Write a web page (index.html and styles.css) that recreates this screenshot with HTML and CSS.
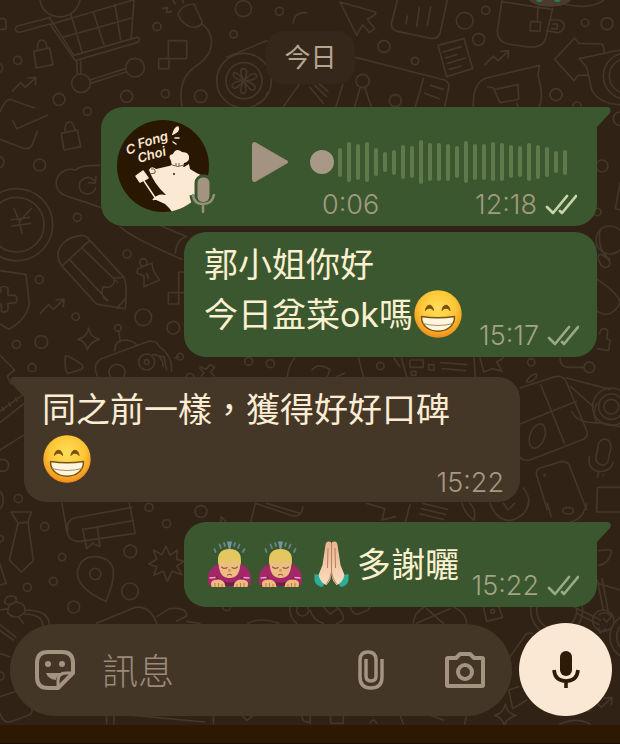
FILE: index.html
```html
<!DOCTYPE html>
<html lang="zh-Hant">
<head>
  <meta charset="UTF-8" />
  <meta name="viewport" content="width=device-width, initial-scale=1.0"/>
  <title>今日</title>
  <link rel="stylesheet" href="styles.css">
</head>
<body>
  <!-- wallpaper doodles -->
  <svg class="wallpaper" viewBox="0 0 1860 2232" preserveAspectRatio="xMidYMin slice" aria-hidden="true">
    <defs>
      <g id="lock"><path d="M-26 -18 L22 -28 L32 22 L-18 32Z M-14 -22 C-20 -60 12 -62 14 -28"/></g>
      <g id="zigzag"><path d="M-35 22 L-10 -4 L4 10 L34 -18 M12 -18 L36 -20 L34 2"/></g>
      <g id="star"><path d="M0 -34 Q4 -6 32 0 Q4 8 -4 32 Q-8 6 -32 0 Q-6 -6 0 -34Z"/></g>
    </defs>
    <!-- top left -->
    <g>
      <path d="M120 0 C130 65 225 70 240 0 M155 72 L400 0 M152 52 L52 78 C40 84 48 100 62 96 L150 72 M150 55 L222 166 L410 112 C422 112 420 124 410 128 L226 182 L150 72 M188 112 L395 54 M212 40 L246 156 M280 36 L312 134 M345 14 L362 120 M402 0 L394 112 M230 184 L232 222 M242 184 L242 222 M270 240 L376 206 M272 250 L378 216"/>
      <circle cx="243" cy="250" r="28"/><circle cx="405" cy="203" r="28"/>
      <path d="M0 56 L12 56 Q18 58 18 66 L18 88 L0 88"/>
      <use href="#lock" x="127" y="172"/><use href="#lock" x="210" y="418"/><use href="#zigzag" x="72" y="252"/>
      <path d="M104 324 L30 298 Q14 298 0 336 M38 362 L50 386 L142 346 M112 394 L96 436 Q88 450 68 444 L0 418"/>
      <path d="M534 42 Q544 14 582 12 L606 64 Q606 80 584 82 Q548 80 534 42Z M488 26 L502 22 L500 38 L514 34 M518 0 L526 12 M548 0 L550 8 M606 72 C640 96 650 150 600 190 C550 220 535 260 546 320"/>
      <path d="M505 122 H560 V176 H505Z M476 176 H507 V206 H476Z"/>
      <circle cx="730" cy="26" r="24"/><circle cx="838" cy="34" r="12"/><circle cx="701" cy="103" r="11"/><circle cx="471" cy="80" r="12"/><circle cx="380" cy="289" r="18"/><circle cx="496" cy="281" r="12"/><circle cx="602" cy="289" r="19"/><circle cx="177" cy="298" r="18"/><circle cx="262" cy="334" r="12"/><circle cx="53" cy="181" r="12"/><circle cx="119" cy="495" r="18"/><circle cx="232" cy="652" r="12"/><circle cx="-6" cy="486" r="18"/><circle cx="-6" cy="204" r="14"/>
      <circle cx="732" cy="242" r="82"/><circle cx="732" cy="242" r="54"/>
      <path d="M732 242 Q712 205 732 206 Q748 208 732 242 Q760 210 770 226 Q774 240 732 242 Q772 252 764 268 Q752 278 732 242 Q744 282 728 280 Q714 276 732 242 Q702 276 696 258 Q696 244 732 242 Q696 236 700 220 Q708 210 732 242Z"/>
      <path d="M680 172 L800 122 M770 312 Q798 302 802 276 M850 320 L900 250 M880 70 Q880 36 920 38"/>
      <path d="M300 496 C260 496 240 498 228 510 C190 500 162 530 170 560 C178 590 210 588 300 622 M284 542 Q262 520 240 546 Q232 578 262 582 Q284 580 286 564 M288 530 L286 550 L266 548"/>
      <path d="M42 626 L58 664 L94 626 M58 664 L66 700 M32 660 L88 652 M36 678 L92 670"/>
      <circle cx="50" cy="674" r="108"/><circle cx="50" cy="674" r="82"/>
    </g>
    <!-- top right -->
    <g transform="translate(930 0)">
      <path d="M90 6 L196 36 Q200 42 192 46 L172 58 L194 86 L178 98 L158 74 L140 106Z M262 0 L244 72 Q244 90 262 94 L366 116 Q384 116 390 100 L412 0 M292 48 L288 72 M328 22 L320 80 M362 20 L352 76"/>
      <path d="M384 136 L462 116 L488 206 L410 230Z M400 156 L454 140 M406 174 L440 164 M412 190 L466 174 M418 208 L454 198"/>
      <use href="#zigzag" x="560" y="172"/>
      <path d="M576 0 L562 94 Q564 126 594 132 L664 142 Q702 140 708 112 L728 26 M718 60 H744 Q764 62 762 80 Q758 98 740 98 L710 92 M728 72 H742 V86 H724 M684 22 L682 62 M662 64 L692 66 L690 94 L660 92Z M580 6 L726 28 M762 12 Q850 34 894 -10"/>
      <path d="M734 178 L794 114 L806 130 L876 132 Q884 144 882 156 M734 178 L792 242 L804 226 L832 226 M930 150 L808 176 L830 202 L846 272 Q870 312 930 314"/>
      <circle cx="950" cy="228" r="70"/><circle cx="950" cy="228" r="52"/>
      <path d="M490 320 Q488 246 530 234 L688 196 L684 226 Q702 290 688 320 M532 260 L550 264 L570 308 L626 298 L624 254 L556 268 M620 310 L624 320"/>
      <path d="M136 172 L404 240 Q420 248 416 264 L404 320 M340 236 L316 320 M344 280 L388 296 M362 256 L400 268 M98 254 L78 320 M150 264 L134 320 M164 262 L184 320 M0 262 L40 310 M14 256 L50 290 M28 252 L54 274"/>
      <circle cx="464" cy="62" r="25"/><circle cx="527" cy="31" r="12"/><circle cx="506" cy="118" r="18"/><circle cx="222" cy="139" r="18"/><circle cx="315" cy="183" r="11"/><circle cx="158" cy="243" r="20"/><circle cx="256" cy="302" r="18"/><circle cx="825" cy="68" r="11"/><circle cx="891" cy="71" r="18"/><circle cx="738" cy="284" r="18"/><circle cx="801" cy="318" r="12"/><circle cx="930" cy="356" r="20"/><circle cx="876" cy="498" r="18"/><circle cx="862" cy="636" r="11"/><circle cx="900" cy="720" r="42"/>
      <path d="M930 550 L916 626 L930 630"/>
    </g>
    <!-- middle left -->
    <g transform="translate(0 690)">
      <path d="M184 106 C160 70 180 20 250 16 Q262 20 270 32 L372 142 Q382 160 376 236 L296 224 Q286 220 280 212Z M188 106 L268 32 M208 88 L324 212 M246 54 L352 156 M324 212 Q298 200 310 170 Q342 180 344 144 L370 142 M376 206 L352 234"/>
      <path d="M0 122 L78 134 L88 222 Q78 270 26 298 L0 282 M0 186 H2 V172 Q14 166 24 174 L24 196 H46 Q54 206 48 218 L24 220 V240 Q14 250 4 244 V222 H0"/>
      <path d="M412 118 L432 108 L456 100 L460 122 L478 150 L432 170 L432 138 L412 130Z M440 130 L446 146"/>
      <circle cx="430" cy="97" r="11"/>
      <use href="#zigzag" x="156" y="228"/><use href="#star" x="266" y="328"/>
      <path d="M505 188 H536 V222 H505Z M556 126 H536 V188 H556"/>
      <path d="M196 378 Q204 374 246 404 Q252 412 244 418 L204 430 Q194 430 196 378Z M292 438 Q276 404 304 386 L446 334 Q470 330 478 350 Q520 380 514 424 M344 362 Q344 330 378 330 Q406 334 410 346 M356 302 L360 330 M478 378 L492 380 L500 420 M524 384 L536 380 M458 374 Q486 372 490 410"/>
      <circle cx="354" cy="294" r="10"/><circle cx="440" cy="396" r="24"/><circle cx="351" cy="427" r="24"/><circle cx="440" cy="396" r="7"/><circle cx="540" cy="380" r="10"/>
      <path d="M600 410 L618 418 L630 404 L644 412 L632 426 L642 438 M604 438 L612 428 L600 416"/>
      <path d="M0 376 L44 420 L22 438 L32 462 M0 544 L66 496 M0 578 L70 522 M0 660 L70 616 M6 532 L12 540 M26 518 L32 528 M46 504 L52 514"/>
      <path d="M360 -10 Q400 26 546 88 M470 -18 L560 20 Q530 26 526 70"/>
      <circle cx="381" cy="72" r="12"/><circle cx="118" cy="149" r="12"/><circle cx="430" cy="262" r="25"/><circle cx="227" cy="260" r="11"/><circle cx="520" cy="293" r="19"/><circle cx="124" cy="336" r="19"/><circle cx="49" cy="343" r="12"/><circle cx="96" cy="413" r="12"/><circle cx="570" cy="442" r="12"/><circle cx="746" cy="394" r="12"/><circle cx="811" cy="401" r="12"/><circle cx="8" cy="706" r="18"/><circle cx="55" cy="806" r="12"/><circle cx="-30" cy="810" r="40"/>
      <path d="M862 440 Q866 404 884 384"/>
    </g>
    <!-- middle right -->
    <g transform="translate(930 690)">
      <path d="M146 384 L160 440 M252 384 L270 410 M274 384 L290 440 M492 384 L496 440 M300 390 H340 V412 H300Z M356 404 H372 V420 H356Z M304 424 H318 V436 H304Z M392 398 L470 404 M396 416 L466 422 M510 384 L522 426 L546 416 L576 424 L560 396 L580 384 M6 420 Q24 396 60 418 L52 440 M80 440 L104 430"/>
      <circle cx="211" cy="408" r="11"/><circle cx="664" cy="397" r="11"/>
      <path d="M750 384 Q750 410 774 412 L822 412 M630 474 L736 440 Q758 436 768 454 L832 606 Q832 622 820 628 L660 690 Q640 694 630 682 M692 464 L764 642 M630 582 L800 514 M660 456 Q640 460 660 440 Q676 428 680 434 Q680 446 660 456 M770 444 L900 478 M782 470 L850 530 M786 544 Q800 582 870 578 L930 590 M860 520 Q846 560 860 576"/>
      <ellipse cx="682" cy="618" rx="22" ry="38" transform="rotate(20 682 618)"/>
      <circle cx="838" cy="412" r="16"/><circle cx="904" cy="530" r="56"/><circle cx="904" cy="530" r="38"/><circle cx="904" cy="530" r="22"/>
      <path d="M866 640 Q876 622 894 630 Q904 638 902 656 L894 694 Q884 712 868 702 Q856 696 858 680Z M838 680 Q832 716 864 724 Q900 728 910 696 M866 726 L862 742"/>
      <path d="M680 736 Q676 720 690 714 L756 694 Q772 694 778 706 L830 840 M680 736 L712 840 M860 840 L862 772 H930 M640 774 Q668 810 648 840 M870 0 Q860 60 900 88 M866 92 Q860 60 888 82 Q908 100 894 110 Q876 118 866 92 M862 148 Q930 194 930 220 Q900 270 862 244 M868 312 Q874 288 892 300 Q894 312 890 326 L900 330 L896 362 L862 356"/>
      <circle cx="704" cy="736" r="2"/><circle cx="880" cy="736" r="1"/>
    </g>
    <!-- bottom left -->
    <g transform="translate(0 1500)">
      <path d="M34 36 L94 36 L84 66 L54 70Z M54 70 L28 180 L64 216 L100 182 L84 66"/>
      <path d="M186 10 L200 92 Q206 126 240 124 L406 100 L388 10 M396 22 L222 54 Q196 64 204 92 M400 62 L250 88 M248 86 L260 146 L278 130 L300 140 L292 80"/>
      <path d="M318 304 Q232 266 232 218 Q240 168 288 170 Q340 176 340 218 Q342 246 318 304Z M498 138 L510 166 L532 150 L530 178 L552 184 L530 198 L546 224 L516 214 L502 244 L490 214 L462 226 L470 200 L446 192 L470 178 L460 150 L486 164Z"/>
      <circle cx="286" cy="222" r="17"/>
      <path d="M0 192 L18 250 L0 256 M290 370 L406 322 Q450 316 470 370 M470 350 L508 326 Q560 320 560 348 L530 364 M560 364 L600 370 M744 370 Q780 350 836 370 M870 320 Q866 350 890 370"/>
      <path d="M14 300 Q24 280 48 292 Q52 310 28 314 Q12 314 14 300 M24 340 Q20 310 50 306 Q80 314 74 336 Q50 364 24 340 M56 350 L70 370 M76 330 Q150 330 148 378 M74 342 Q130 344 128 378 M0 330 L26 326 M0 374 L48 412 M0 392 L40 420 M0 460 L30 470 M0 590 L60 570 M0 640 Q10 670 30 666 L90 644 Q100 634 94 624"/>
      <path d="M766 10 L752 66 M766 10 L880 48 Q906 50 908 20 M800 10 L900 40 M662 66 L664 50 L678 66"/>
      <path d="M320 646 V672 M342 646 V672 M400 646 L614 666 M640 646 V672 M760 646 L740 662 L728 648 M906 646 Q904 668 930 666"/>
      <circle cx="134" cy="80" r="12"/><circle cx="186" cy="171" r="11"/><circle cx="160" cy="244" r="12"/><circle cx="82" cy="262" r="12"/><circle cx="221" cy="321" r="18"/><circle cx="390" cy="274" r="25"/><circle cx="391" cy="154" r="19"/><circle cx="500" cy="71" r="12"/><circle cx="447" cy="22" r="12"/><circle cx="603" cy="34" r="18"/><circle cx="0" cy="116" r="10"/><circle cx="0" cy="528" r="12"/><circle cx="680" cy="320" r="12"/><circle cx="908" cy="330" r="18"/>
    </g>
    <!-- bottom right -->
    <g transform="translate(930 1500)">
      <path d="M170 10 L224 26 L216 60 L256 50 M300 14 L286 66 M338 10 L412 28 M334 26 L408 44 M330 42 L400 58 M540 10 Q560 62 600 62 Q650 50 654 10 M580 10 L594 30 L614 10 M712 10 L724 50 M830 10 Q820 60 780 66 M860 10 V36 H930 M456 10 Q466 44 492 60 Q500 30 480 10"/>
      <ellipse cx="774" cy="32" rx="16" ry="10"/>
      <path d="M866 152 Q902 146 904 152 Q900 190 866 196 M862 240 L880 330 M876 236 L894 330 M864 250 L930 270 M790 320 L872 360 M800 340 L868 374 M866 344 Q890 330 904 350 L890 366 L880 356 M866 384 L870 400 L888 386"/>
      <circle cx="880" cy="362" r="32"/><circle cx="740" cy="330" r="78"/><circle cx="740" cy="330" r="60"/><circle cx="970" cy="410" r="70"/><circle cx="970" cy="410" r="50"/>
      <path d="M0 330 Q10 362 40 370 M80 320 Q120 360 80 370 M40 320 L60 342 L84 326 M120 320 Q130 350 150 340 Q180 330 180 320 M310 370 Q310 340 344 320 M320 370 L420 326 M350 326 L400 370 M430 320 Q470 340 470 370 M520 320 L530 364 L578 352 L566 320 M600 470 L650 400 L668 400 M596 570 L608 626 L650 600 M596 570 L626 560"/>
      <use href="#star" x="586" y="646"/><use href="#zigzag" x="870" y="612"/>
      <circle cx="548" cy="334" r="6"/>
      <path d="M0 646 V672 M62 646 V670 H100 V646 M180 670 Q190 650 200 670 M270 646 L280 672 M360 646 L400 660 M470 646 L464 672 M750 672 Q800 650 840 672"/>
    </g>
    <g class="peek">
      <ellipse class="peek-base" cx="1650" cy="-8" rx="66" ry="28"/>
      <ellipse class="peek-dot" cx="1618" cy="0" rx="9" ry="6"/>
      <ellipse class="peek-dot" cx="1672" cy="0" rx="9" ry="6"/>
    </g>
  </svg>

  <!-- shared drawings -->
  <svg class="sprite" aria-hidden="true">
    <defs>
      <radialGradient id="faceFill" cx="50%" cy="38%" r="62%">
        <stop offset="0" stop-color="#ffdf5a"/>
        <stop offset=".6" stop-color="#fdc636"/>
        <stop offset="1" stop-color="#f08d19"/>
      </radialGradient>
      <linearGradient id="handFill" x1="0" y1="0" x2="0" y2="1">
        <stop offset="0" stop-color="#e9b48e"/>
        <stop offset="1" stop-color="#fadcc0"/>
      </linearGradient>
    </defs>
    <symbol id="ticks" viewBox="0 0 32 22">
      <path d="M2 13 L8 19 L22 2 M15 17 L17 19 L31 2" fill="none" stroke="currentColor" stroke-width="2.7" stroke-linecap="round" stroke-linejoin="round"/>
    </symbol>
    <symbol id="grin" viewBox="0 0 48 48">
      <circle cx="24" cy="24" r="23.700" fill="url(#faceFill)"/>
      <path d="M11.500 20.500 C12 13.500 19 13.500 19.500 20.500 C17.500 17.500 13.500 17.500 11.500 20.500Z M28 20.500 C28.500 13.500 35.500 13.500 36 20.500 C34 17.500 30 17.500 28 20.500Z" fill="#7a5110" stroke="#7a5110" stroke-linejoin="round"/>
      <path d="M7.500 26.500 Q24 29 40.500 26.500 C41 46 7 46 7.500 26.500Z" fill="#fff6e2" stroke="#79540f" stroke-width="1.500" stroke-linejoin="round"/>
      <path d="M9 33.500 Q24 37.500 39 33.500" fill="none" stroke="#b0905c" stroke-width="1.200"/>
    </symbol>
    <symbol id="bow" viewBox="0 0 48 48">
      <path d="M9 9 L10 12 M14 4.500 L15.500 8 M18.500 3 L19.500 6 M29.500 3 L28.500 6 M34 4.500 L32.500 8 M39 9 L37.500 12" stroke="#67858a" stroke-width="1.800" stroke-linecap="round"/>
      <path d="M21.500 1.500 h5 L24.800 9 h-1.600Z" fill="#7196a5"/>
      <path d="M3 45 C0 30 9 24 16 24 L32 24 C39 24 48 30 45 45 L34 46 L24 42 L14 46Z" fill="#a32667"/>
      <path d="M10 35 Q13 41 24 43 Q35 41 38 35 L34 46 H14Z" fill="#7b184d"/>
      <path d="M13 20 C13 35 18 38 24 38 C30 38 35 35 35 20 L33 16 H15Z" fill="#eebc85"/>
      <path d="M13 25 C11 14 15 9 24 9 C33 9 37 14 35 25 Q34 22 33 21.500 Q24 24 15 21.500 Q14 22 13 25Z" fill="#e4c760"/>
      <path d="M16 27 Q19 29.500 21.500 27.500 M26.500 27.500 Q29 29.500 32 27 M22 35 Q24 33.500 26 35" stroke="#91602f" stroke-width="1.200" fill="none" stroke-linecap="round"/>
      <path d="M23 29 L22.500 31.500 H25.500 L25 29Z" fill="#d58e53"/>
      <path d="M6 47 Q4 41 9 40 Q16 38 19 43 L20 47Z M42 47 Q44 41 39 40 Q32 38 29 43 L28 47Z" fill="#efb97f"/>
      <path d="M9.500 43 V47 M13 43 V47 M16.500 44 V47 M38.500 43 V47 M35 43 V47 M31.500 44 V47" stroke="#b97c45" fill="none"/>
      <path d="M4 38 L10 37.500 M44 38 L38 37.500" stroke="#e8a6c5" stroke-width="1.500"/>
    </symbol>
    <symbol id="pray" viewBox="0 0 48 48">
      <path d="M7 34 Q13 34 18 42 L15 47 Q8 46 7 40Z M41 34 Q35 34 30 42 L33 47 Q40 46 41 40Z" fill="#2dac97"/>
      <path d="M23.500 2 Q18.500 0 18 5 L15 25 L11 35 Q13 43 19 45 Q24 40 24 33Z" fill="url(#handFill)"/>
      <path d="M24.500 2 Q29.500 0 30 5 L33 25 L37 35 Q35 43 29 45 Q24 40 24 33Z" fill="url(#handFill)"/>
      <path d="M24 3 V32 Q23 39 19 44 M24 32 Q25 39 29 44 M20.500 8 L20 28 M27.500 8 L28 28" stroke="#b97e5b" fill="none"/>
    </symbol>
    <symbol id="tail" viewBox="0 0 20 24">
      <path d="M0 0 H17 Q21 1 19 6 L6 20 V24 H0Z" fill="currentColor"/>
    </symbol>
  </svg>

  <main class="chat">
    <div class="date">今日</div>

    <article class="bubble outgoing voice">
      <svg class="tail" aria-hidden="true"><use href="#tail"/></svg>
      <svg class="avatar" viewBox="0 0 100 96" role="img" aria-label="C Fong Choi">
        <defs><clipPath id="round"><circle cx="46" cy="46" r="46"/></clipPath></defs>
        <circle cx="46" cy="46" r="46" fill="#2a1702"/>
        <g clip-path="url(#round)">
          <path d="M32 50 Q34 45 39 49 L52 46 Q61 42 67 47 L72 44 L73 49 Q79 53 84 55 Q96 62 94 98 L58 98 Q56 91 48 84 L37 79 Q40 73 49 75 Q37 64 32 50Z" fill="#fce9d4"/>
          <path d="M31 58 Q38 72 49 75 Q43 71 37 73Z" fill="#2a1702"/>
        </g>
        <path d="M34 49 Q39 48 38 53 L33 54" fill="none" stroke="#73583e"/>
        <circle cx="57" cy="54" r="1" fill="#2a1702"/>
        <path d="M55 46 L54 41 Q50 35 56 34 Q59 27 65 32 Q73 32 72 39 Q71 42 67 43 L66 47Z" fill="#fce9d4"/>
        <path d="M55 45 Q61 48 67 45 M59 43 V46 M62 43 V46" stroke="#79624a" fill="none"/>
        <path d="M19 56 L26 51 L31 58 L23 62Z M27 61 L39 79 M36 80 Q40 74 46 80" fill="#fce9d4" stroke="#fce9d4" stroke-width="1.500" stroke-linejoin="round"/>
        <path d="M56 14 Q58 7 61 7 Q63 11 56 14Z M58 18 L62 18 M56 22 L59 24" fill="#fce9d4" stroke="#fce9d4" stroke-width="1.500" stroke-linecap="round"/>
        <g transform="rotate(-16 30 24)" class="logo-text">
          <text x="8" y="29">C</text>
          <text x="21" y="26">Fong</text>
          <text x="17" y="40">Choi</text>
        </g>
        <rect x="79" y="56" width="15" height="28" rx="7" fill="#a39380" stroke="#3b572f" stroke-width="3"/>
        <path d="M76 75 Q77 85 86 85 Q95 85 97 75" fill="none" stroke="#3b572f" stroke-width="7"/>
        <rect x="81" y="58" width="11" height="24" rx="5" fill="#a39380"/>
        <path d="M76 75 Q77 84 86 84 Q95 84 97 75 M86 84 V92" fill="none" stroke="#93917a" stroke-width="2.500" stroke-linecap="round"/>
      </svg>
      <button class="play" type="button" aria-label="播放">
        <svg viewBox="0 0 38 44"><path d="M4 3 L35 21 Q37 22 35 23 L4 41 Q2 41 2 39 V5 Q2 3 4 3Z" fill="currentColor" stroke="currentColor" stroke-width="2" stroke-linejoin="round"/></svg>
      </button>
      <div class="player">
        <div class="track">
          <svg class="wave" viewBox="0 0 230 44" aria-hidden="true">
            <path d="M2 10v25M11 4v36M20 6v32M29 4v36M38 10v24M47 14v16M56 12v21M65 7v30M74 8v28M83 2v40M92 5v34M101 5v34M110 6v33M119 8v28M128 3v38M137 6v32M146 6v32M155 4v35M164 5v34M173 7v29M182 8v27M191 5v34M200 7v30M209 9v26M218 13v18M227 12v21"/>
          </svg>
          <input class="seek" type="range" min="0" max="6" value="0" aria-label="語音進度">
        </div>
        <div class="times">
          <span>0:06</span>
          <span class="sent"><time>12:18</time><svg class="ticks read"><use href="#ticks"/></svg></span>
        </div>
      </div>
    </article>

    <article class="bubble outgoing follow">
      <p class="text">郭小姐你好<br>今日盆菜ok嗎<svg class="emoji" role="img" aria-label="笑"><use href="#grin"/></svg></p>
      <div class="meta"><time>15:17</time><svg class="ticks"><use href="#ticks"/></svg></div>
    </article>

    <article class="bubble incoming">
      <svg class="tail" aria-hidden="true"><use href="#tail"/></svg>
      <p class="text">同之前一樣，獲得好好口碑<br><svg class="emoji" role="img" aria-label="笑"><use href="#grin"/></svg></p>
      <div class="meta"><time>15:22</time></div>
    </article>

    <article class="bubble outgoing single">
      <svg class="tail" aria-hidden="true"><use href="#tail"/></svg>
      <p class="text"><svg class="emoji wide" role="img" aria-label="鞠躬"><use href="#bow"/></svg><svg class="emoji wide" role="img" aria-label="鞠躬"><use href="#bow"/></svg><svg class="emoji wide" role="img" aria-label="多謝"><use href="#pray"/></svg>多謝曬</p>
      <div class="meta"><time>15:22</time><svg class="ticks"><use href="#ticks"/></svg></div>
    </article>
  </main>

  <form class="composer">
    <div class="field">
      <button class="icon" type="button" aria-label="貼圖">
        <svg viewBox="0 0 40 40" fill="none" stroke="currentColor" stroke-width="4" stroke-linejoin="round">
          <path d="M13 2 H27 Q38 2 38 13 V23 L23 38 H13 Q2 38 2 27 V13 Q2 2 13 2Z"/>
          <path d="M38 23 H31 Q23 23 23 31 V38" stroke-width="3"/>
          <circle cx="13" cy="14" r="3" fill="currentColor" stroke="none"/><circle cx="27" cy="14" r="3" fill="currentColor" stroke="none"/>
          <path d="M11 23 H27 Q21 26 21 30 Q13 29 11 23Z" fill="currentColor" stroke="none"/>
        </svg>
      </button>
      <input class="message" type="text" placeholder="訊息" aria-label="訊息">
      <button class="icon clip" type="button" aria-label="附件">
        <svg viewBox="0 0 40 40" fill="none" stroke="currentColor" stroke-width="3.500" stroke-linecap="butt">
          <path d="M31 9 V27 Q31 38 20 38 Q9 38 9 27 V10 Q9 2 17 2 Q25 2 25 10 V26 Q25 31 20 31 Q15 31 15 26 V9"/>
        </svg>
      </button>
      <button class="icon" type="button" aria-label="相機">
        <svg viewBox="0 0 40 40" fill="none" stroke="currentColor" stroke-width="4" stroke-linejoin="round">
          <path d="M3 8 H11 L15 4 H25 L29 8 H37 Q38 8 38 9 V35 Q38 36 37 36 H3 Q2 36 2 35 V9 Q2 8 3 8Z"/>
          <circle cx="20" cy="22" r="7"/>
        </svg>
      </button>
    </div>
    <button class="record" type="button" aria-label="錄音">
      <svg viewBox="0 0 28 38">
        <rect x="8" y="0" width="12" height="25" rx="6" fill="currentColor"/>
        <path d="M2 19 Q3 30 14 30 Q25 30 26 19 M14 30 V37" fill="none" stroke="currentColor" stroke-width="3.600"/>
      </svg>
    </button>
  </form>
  <div class="navbar"></div>
</body>
</html>
```

FILE: styles.css
```css
* {
  box-sizing: border-box;
}

body {
  position: relative;
  display: flex;
  flex-direction: column;
  min-height: 100vh;
  margin: 0;
  overflow-x: hidden;
  background: #302214;
  color: #fbecd4;
  font-family: Inter, "Noto Sans CJK TC", sans-serif;
  font-weight: 300;
}

button,
input {
  font: inherit;
  color: inherit;
  background: none;
  border: none;
  padding: 0;
  margin: 0;
}

button {
  display: flex;
  align-items: center;
  justify-content: center;
  cursor: pointer;
}

/* wallpaper */
.wallpaper {
  position: absolute;
  top: 0;
  left: 0;
  z-index: -1;
  width: 100%;
  height: 100%;
  fill: none;
  stroke: #45362a;
  stroke-width: 5px;
  stroke-linecap: round;
  stroke-linejoin: round;
}

.peek {
  stroke: none;
}

.peek-base {
  fill: #4a3b2e;
}

.peek-dot {
  fill: #2d7a50;
}

.sprite {
  position: absolute;
  width: 0;
  height: 0;
}

/* messages */
.chat {
  flex: 1;
  display: flex;
  flex-direction: column;
  gap: 20px;
  padding: 31px 23px 16px 24px;
}

.date {
  align-self: center;
  margin-bottom: 3px;
  padding: 1px 18px 0;
  border-radius: 18px;
  background: #35281a;
  color: #b5a592;
  font-size: 26px;
  font-weight: 400;
  line-height: 52px;
}

.bubble {
  position: relative;
  display: grid;
  border-radius: 22px;
}

.outgoing {
  align-self: flex-end;
  background: #3b572f;
  color: #fbf0d0;
}

.incoming {
  align-self: flex-start;
  width: 496px;
  max-width: 100%;
  background: #453727;
}

.follow {
  margin-top: -14px;
}

.tail {
  position: absolute;
  top: 0;
  right: -14px;
  width: 20px;
  height: 24px;
  color: #3b572f;
}

.outgoing:has(.tail) {
  border-top-right-radius: 0;
}

.incoming {
  border-top-left-radius: 0;
}

.incoming .tail {
  right: auto;
  left: -14px;
  color: #453727;
  transform: scaleX(-1);
}

.text,
.meta {
  grid-area: 1 / 1;
}

.text {
  margin: 0;
  padding: 8px 20px 17px;
  font-size: 34px;
  font-weight: 400;
  line-height: 50px;
}

.outgoing .text {
  padding-right: 134px;
}

.incoming .text {
  padding-left: 18px;
}

.single .text {
  padding-top: 18px;
}

.outgoing.single .text {
  padding-right: 138px;
}

.emoji {
  width: 50px;
  height: 48px;
  vertical-align: -11px;
}

.wide {
  width: 51px;
}

.meta {
  place-self: end;
  display: flex;
  align-items: center;
  gap: 8px;
  padding: 0 18px 7px;
  color: #a3a486;
  font-size: 27px;
  line-height: 28px;
}

.incoming .meta {
  padding-right: 16px;
  padding-bottom: 5px;
  color: #a89784;
}

.ticks {
  width: 32px;
  height: 22px;
  color: #9ba886;
}

.read {
  color: #c8d5a8;
}

/* voice message */
.voice {
  display: flex;
  align-items: flex-start;
  width: 496px;
  max-width: 100%;
  padding: 13px 20px 7px 16px;
}

.avatar {
  flex: none;
  width: 100px;
  height: 96px;
}

.logo-text {
  fill: #fce9d4;
  font-size: 13px;
  font-style: italic;
  font-weight: 600;
}

.play {
  margin: 20px 21px 0 34px;
  color: #a39380;
}

.play svg {
  width: 38px;
  height: 44px;
}

.player {
  flex: 1;
  min-width: 0;
}

.track {
  position: relative;
  display: flex;
  margin-top: 20px;
  padding-left: 28px;
}

.wave {
  flex: none;
  width: 230px;
  height: 44px;
  fill: none;
  stroke: #5f794b;
  stroke-width: 4px;
  stroke-linecap: round;
}

.seek {
  position: absolute;
  inset: 0;
  width: 100%;
  height: 44px;
  appearance: none;
}

.seek::-webkit-slider-thumb {
  appearance: none;
  width: 24px;
  height: 24px;
  border-radius: 50%;
  background: #a89886;
}

.times {
  display: flex;
  justify-content: space-between;
  margin-top: 7px;
  padding-left: 12px;
  color: #a39b80;
  font-size: 27px;
  line-height: 28px;
}

.sent {
  display: flex;
  align-items: center;
  gap: 8px;
}

/* composer */
.composer {
  display: flex;
  align-items: center;
  gap: 7px;
  padding: 0 8px 9px 10px;
}

.field {
  flex: 1;
  min-width: 0;
  display: flex;
  align-items: center;
  height: 92px;
  padding: 0 27px 0 25px;
  border-radius: 46px;
  background: #433627;
  color: #a39380;
}

.icon {
  flex: none;
}

.icon svg {
  width: 40px;
  height: 40px;
}

.message {
  flex: 1;
  min-width: 0;
  padding: 4px 0 0 27px;
  font-size: 36px;
  outline: none;
}

.message::placeholder {
  color: #9b8b79;
  opacity: 1;
}

.clip {
  margin-right: 54px;
}

.record {
  flex: none;
  width: 93px;
  height: 93px;
  border-radius: 50%;
  background: #fae7d4;
  color: #2d1b08;
}

.record svg {
  width: 28px;
  height: 38px;
}

.navbar {
  height: 19px;
  background: #2c1803;
  border-bottom: 1px solid #150c02;
}
```
